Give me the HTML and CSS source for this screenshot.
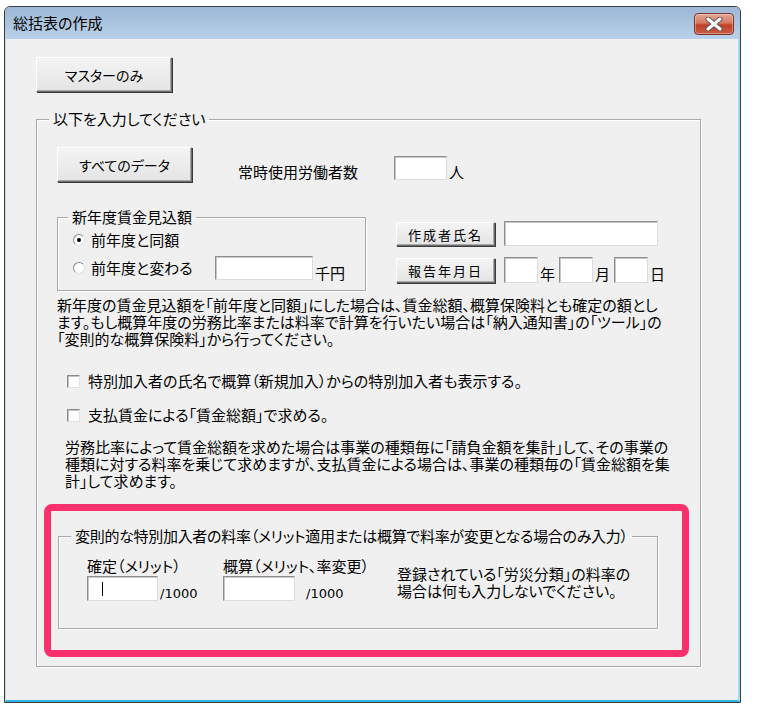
FILE: index.html
```html
<!DOCTYPE html>
<html lang="ja">
<head>
  <meta charset="UTF-8" />
  <title>総括表の作成</title>
  <link rel="stylesheet" href="styles.css">
</head>
<body>
  <div class="dialog">
    <div class="titlebar">
      <span class="title">総括表の作成</span>
      <button class="close-btn" aria-label="閉じる">
        <svg width="22" height="14" viewBox="0 0 22 14">
          <path d="M5 2 L17 12 M17 2 L5 12" stroke="#5a5a5a" stroke-width="5" stroke-linecap="round"/>
          <path d="M5 2 L17 12 M17 2 L5 12" stroke="#fff" stroke-width="3" stroke-linecap="round"/>
        </svg>
      </button>
    </div>

    <div class="client">
      <button class="btn btn-master">マスターのみ</button>

      <fieldset class="group group-main">
        <legend>以下を入力してください</legend>

        <div class="row row-top">
          <button class="btn btn-all">すべてのデータ</button>
          <span class="workers-label">常時使用労働者数</span>
          <div class="textbox tb-workers"></div>
          <span class="unit">人</span>
        </div>

        <div class="row row-mid">
          <fieldset class="group group-wage">
            <legend>新年度賃金見込額</legend>
            <div class="radio-row first">
              <span class="radio checked"></span>
              <span class="radio-text">前年度と同額</span>
            </div>
            <div class="radio-row second">
              <span class="radio"></span>
              <span class="radio-text wide">前年度と変わる</span>
              <div class="textbox tb-wage"></div>
              <span class="unit">千円</span>
            </div>
          </fieldset>

          <div class="side">
            <div class="side-row">
              <button class="btn btn-small">作成者氏名</button>
              <div class="textbox tb-name"></div>
            </div>
            <div class="side-row second">
              <button class="btn btn-small tall">報告年月日</button>
              <div class="textbox tb-date"></div><span class="unit">年</span>
              <div class="textbox tb-date"></div><span class="unit">月</span>
              <div class="textbox tb-date"></div><span class="unit">日</span>
            </div>
          </div>
        </div>

        <p class="note note-wage">新年度の賃金見込額を「前年度と同額」にした場合は、賃金総額、概算保険料とも確定の額とし<br>ます。もし概算年度の労務比率または料率で計算を行いたい場合は「納入通知書」の「ツール」の<br>「変則的な概算保険料」から行ってください。</p>

        <div class="check-row first">
          <span class="checkbox"></span>
          <span>特別加入者の氏名で概算（新規加入）からの特別加入者も表示する。</span>
        </div>
        <div class="check-row">
          <span class="checkbox"></span>
          <span>支払賃金による「賃金総額」で求める。</span>
        </div>

        <p class="note note-labor">労務比率によって賃金総額を求めた場合は事業の種類毎に「請負金額を集計」して、その事業の<br>種類に対する料率を乗じて求めますが、支払賃金による場合は、事業の種類毎の「賃金総額を集<br>計」して求めます。</p>

        <div class="highlight">
          <fieldset class="group group-rate">
            <legend>変則的な特別加入者の料率（メリット適用または概算で料率が変更となる場合のみ入力）</legend>
            <div class="rate-row">
              <div class="rate-col first">
                <div class="rate-label">確定（メリット）</div>
                <div class="rate-input">
                  <div class="textbox tb-rate"><span class="caret"></span></div>
                  <span class="per">/1000</span>
                </div>
              </div>
              <div class="rate-col second">
                <div class="rate-label">概算（メリット、率変更）</div>
                <div class="rate-input">
                  <div class="textbox tb-rate wide"></div>
                  <span class="per spaced">/1000</span>
                </div>
              </div>
              <p class="rate-note">登録されている「労災分類」の料率の<br>場合は何も入力しないでください。</p>
            </div>
          </fieldset>
        </div>
      </fieldset>
    </div>
  </div>
</body>
</html>
```

FILE: styles.css
```css
body {
  margin: 0;
  background: #fff;
  font-family: "Noto Sans CJK JP", "Noto Sans", sans-serif;
  font-size: 15px;
  color: #000;
  font-feature-settings: "palt";
}

.dialog {
  box-sizing: border-box;
  width: 737px;
  height: 697px;
  margin: 6px 0 0 4px;
  border: 1px solid #3c3c3c;
  border-radius: 6px 6px 0 0;
  background: #f0f0f0;
  display: flex;
  flex-direction: column;
  overflow: hidden;
}

.titlebar {
  height: 32px;
  flex: none;
  display: flex;
  align-items: flex-start;
  justify-content: space-between;
  padding: 0 6px 0 8px;
  background: linear-gradient(#9cb8d5, #b9d1ea);
  border-radius: 5px 5px 0 0;
}
.title {
  font-size: 15px;
  line-height: 16px;
  margin-top: 8px;
  color: #000;
}
.close-btn {
  width: 40px;
  height: 22px;
  margin-top: 6px;
  padding: 0;
  border: 1px solid #7a3326;
  border-radius: 4px;
  background: linear-gradient(#e3a796 0%, #d47861 45%, #c0402a 55%, #c95c42 100%);
  box-shadow: inset 0 0 0 1px rgba(255,255,255,0.35);
  display: flex;
  align-items: center;
  justify-content: center;
}

.client {
  flex: 1;
  border-left: 1px solid #c9dcef;
  border-right: 2px solid #9fdcf5;
  border-bottom: 2px solid #2bb4e4;
}

/* buttons */
.btn {
  box-sizing: border-box;
  font-family: inherit;
  font-feature-settings: "palt";
  color: #000;
  background: linear-gradient(#f4f4f4, #e4e4e4);
  border: 1px solid;
  border-color: #fff #6b6b6b #6b6b6b #fff;
  box-shadow: inset -1px -1px 0 #a8a8a8, 1px 1px 0 #3a3a3a;
  padding: 0;
  display: block;
}
.btn-master {
  width: 136px;
  height: 35px;
  margin: 18px 0 0 30px;
  font-size: 14px;
}
.btn-all {
  width: 135px;
  height: 35px;
  font-size: 14px;
  flex: none;
}
.btn-small {
  width: 99px;
  height: 24px;
  font-size: 13px;
  letter-spacing: 2px;
  flex: none;
}
.btn-small.tall {
  height: 25px;
}

/* group boxes */
.group {
  box-sizing: border-box;
  margin: 0;
  padding: 0;
  min-width: 0;
  border: 1px solid #a9a9a9;
  box-shadow: inset 1px 1px 0 #fff, 1px 1px 0 #fff;
}
.group legend {
  padding: 0 4px;
  line-height: 16px;
  font-size: 15px;
}
.group-main {
  width: 665px;
  height: 556px;
  margin: 19px 0 0 30px;
}
.group-main > legend {
  margin-left: 12px;
}

.row {
  display: flex;
}
.row-top {
  margin: 20px 0 0 20px;
  align-items: flex-end;
}
.workers-label {
  width: 156px;
  margin-left: 46px;
  line-height: 16px;
  margin-bottom: 2px;
}
.unit {
  line-height: 16px;
  margin-left: 2px;
}
.row-top .unit {
  margin-bottom: 2px;
}

.textbox {
  box-sizing: border-box;
  background: #fff;
  border: 1px solid;
  border-color: #8e8e8e #dcdcdc #dcdcdc #8e8e8e;
  box-shadow: inset 1px 1px 0 #c8c8c8;
  flex: none;
}
.tb-workers {
  width: 53px;
  height: 24px;
  margin-bottom: 2px;
}

.row-mid {
  margin-top: 27px;
  align-items: flex-start;
}
.group-wage {
  width: 309px;
  height: 82px;
  margin-left: 20px;
  flex: none;
}
.group-wage legend {
  margin-left: 10px;
}
.radio-row {
  display: flex;
  align-items: center;
  margin-left: 15px;
}
.radio-row.first {
  margin-top: 7px;
  height: 16px;
}
.radio-row.second {
  margin-top: 8px;
  height: 24px;
}
.radio {
  box-sizing: border-box;
  width: 12px;
  height: 12px;
  border-radius: 50%;
  border: 1px solid;
  border-color: #8a8a8a #e0e0e0 #e0e0e0 #8a8a8a;
  background: #fff;
  display: flex;
  align-items: center;
  justify-content: center;
  flex: none;
}
.radio.checked::after {
  content: "";
  width: 4px;
  height: 4px;
  border-radius: 50%;
  background: #000;
}
.radio-text {
  margin-left: 6px;
  line-height: 16px;
}
.radio-text.wide {
  width: 124px;
}
.tb-wage {
  width: 98px;
  height: 24px;
}
.radio-row.second .unit {
  align-self: flex-end;
  margin-bottom: -1px;
}

.side {
  margin: 12px 0 0 30px;
}
.side-row {
  display: flex;
  align-items: flex-end;
}
.side-row.second {
  margin-top: 11px;
}
.tb-name {
  width: 154px;
  height: 25px;
  margin-left: 9px;
}
.tb-date {
  width: 34px;
  height: 26px;
  margin-left: 4px;
}
.side-row .tb-date:first-of-type {
  margin-left: 9px;
}
.side-row .unit {
  margin-bottom: 1px;
}

.note {
  margin: 0;
  line-height: 17px;
  white-space: nowrap;
}
.note-wage {
  margin: 5px 0 0 20px;
}
.note-labor {
  margin: 15px 0 0 28px;
}

.check-row {
  display: flex;
  align-items: center;
  height: 16px;
  margin: 18px 0 0 30px;
  line-height: 16px;
}
.check-row.first {
  margin-top: 26px;
}
.checkbox {
  box-sizing: border-box;
  width: 13px;
  height: 13px;
  margin-right: 8px;
  background: #fff;
  border: 1px solid;
  border-color: #8a8a8a #e2e2e2 #e2e2e2 #8a8a8a;
  box-shadow: inset 1px 1px 0 #c4c4c4;
}

/* red annotation frame */
.highlight {
  box-sizing: border-box;
  width: 645px;
  height: 153px;
  margin: 15px 0 0 7px;
  border: 7px solid #fa306c;
  border-radius: 8px;
  padding: 17px 0 0 7px;
}
.group-rate {
  width: 600px;
  height: 101px;
}
.group-rate legend {
  margin-left: 12px;
  letter-spacing: -0.3px;
}
.rate-row {
  display: flex;
  align-items: flex-start;
}
.rate-col {
  margin-top: 14px;
  flex: none;
}
.rate-col.first {
  width: 136px;
  margin-left: 28px;
}
.rate-col.second {
  width: 174px;
}
.rate-label {
  line-height: 16px;
}
.rate-input {
  display: flex;
  align-items: flex-end;
  margin-top: 2px;
}
.tb-rate {
  width: 71px;
  height: 25px;
  position: relative;
}
.tb-rate.wide {
  width: 72px;
}
.caret {
  position: absolute;
  left: 14px;
  top: 5px;
  width: 1px;
  height: 14px;
  background: #000;
}
.per {
  font-family: "DejaVu Sans", sans-serif;
  font-size: 13px;
  line-height: 15px;
  margin-left: 2px;
}
.per.spaced {
  margin-left: 11px;
}
.rate-note {
  margin: 21px 0 0 0;
  line-height: 17px;
  white-space: nowrap;
}
```
